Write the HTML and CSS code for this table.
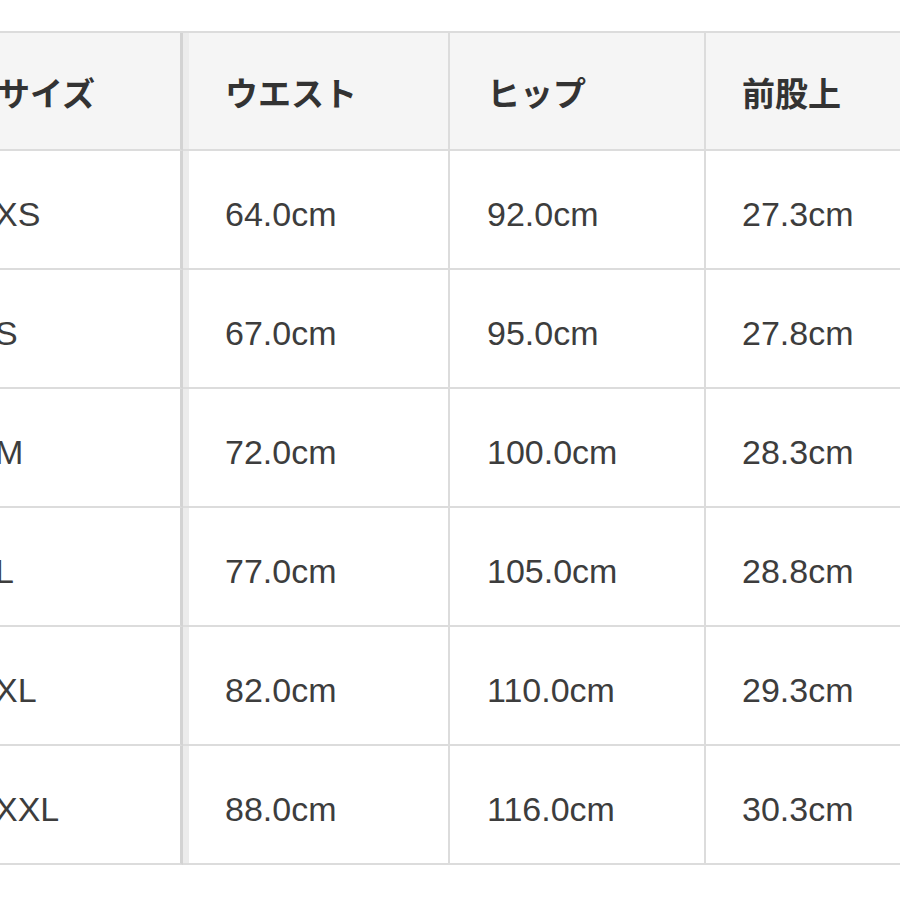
FILE: index.html
```html
<!DOCTYPE html>
<html lang="ja">
<head>
<meta charset="utf-8">
<title>サイズ表</title>
<link rel="stylesheet" href="styles.css">
</head>
<body>
<div class="page">
  <div class="size-table">
    <div class="cell head c1">サイズ</div>
    <div class="cell head c2">ウエスト</div>
    <div class="cell head c3">ヒップ</div>
    <div class="cell head c4">前股上</div>

    <div class="cell c1">XS</div>
    <div class="cell c2">64.0cm</div>
    <div class="cell c3">92.0cm</div>
    <div class="cell c4">27.3cm</div>

    <div class="cell c1">S</div>
    <div class="cell c2">67.0cm</div>
    <div class="cell c3">95.0cm</div>
    <div class="cell c4">27.8cm</div>

    <div class="cell c1">M</div>
    <div class="cell c2">72.0cm</div>
    <div class="cell c3">100.0cm</div>
    <div class="cell c4">28.3cm</div>

    <div class="cell c1">L</div>
    <div class="cell c2">77.0cm</div>
    <div class="cell c3">105.0cm</div>
    <div class="cell c4">28.8cm</div>

    <div class="cell c1">XL</div>
    <div class="cell c2">82.0cm</div>
    <div class="cell c3">110.0cm</div>
    <div class="cell c4">29.3cm</div>

    <div class="cell c1">XXL</div>
    <div class="cell c2">88.0cm</div>
    <div class="cell c3">116.0cm</div>
    <div class="cell c4">30.3cm</div>
  </div>
</div>
</body>
</html>
```

FILE: styles.css
```css
html, body {
  margin: 0;
  padding: 0;
  background: #ffffff;
  overflow: hidden;
}

.page {
  width: 900px;
  height: 900px;
  overflow: hidden;
  padding-top: 31px;
  box-sizing: border-box;
}

.size-table {
  display: grid;
  grid-template-columns: 223px 267px 256px 280px;
  grid-template-rows: 118px repeat(6, 119px);
  margin-left: -40px;
  width: 1026px;
  border-top: 2px solid #dcdcdc;
  font-family: "Liberation Sans", "Noto Sans CJK JP", sans-serif;
}

.cell {
  box-sizing: border-box;
  display: flex;
  align-items: center;
  padding-left: 36px;
  padding-top: 10px;
  border-bottom: 2px solid #dcdcdc;
  border-right: 2px solid #dcdcdc;
  font-size: 34px;
  color: #3d3d3d;
  white-space: nowrap;
}

.head {
  background: #f5f5f5;
  font-family: "Noto Sans CJK JP", "Liberation Sans", sans-serif;
  font-weight: 700;
  font-size: 33px;
  color: #333333;
  padding-top: 2px;
}

.c1 {
  padding-left: 35px;
  border-right: 3px solid #d3d3d3;
}

.head.c1 {
  padding-left: 37px;
}

.c2 {
  padding-left: 42px;
  box-shadow: inset 6px 0 0 #ececec;
}

.c3 {
  padding-left: 37px;
}
```
